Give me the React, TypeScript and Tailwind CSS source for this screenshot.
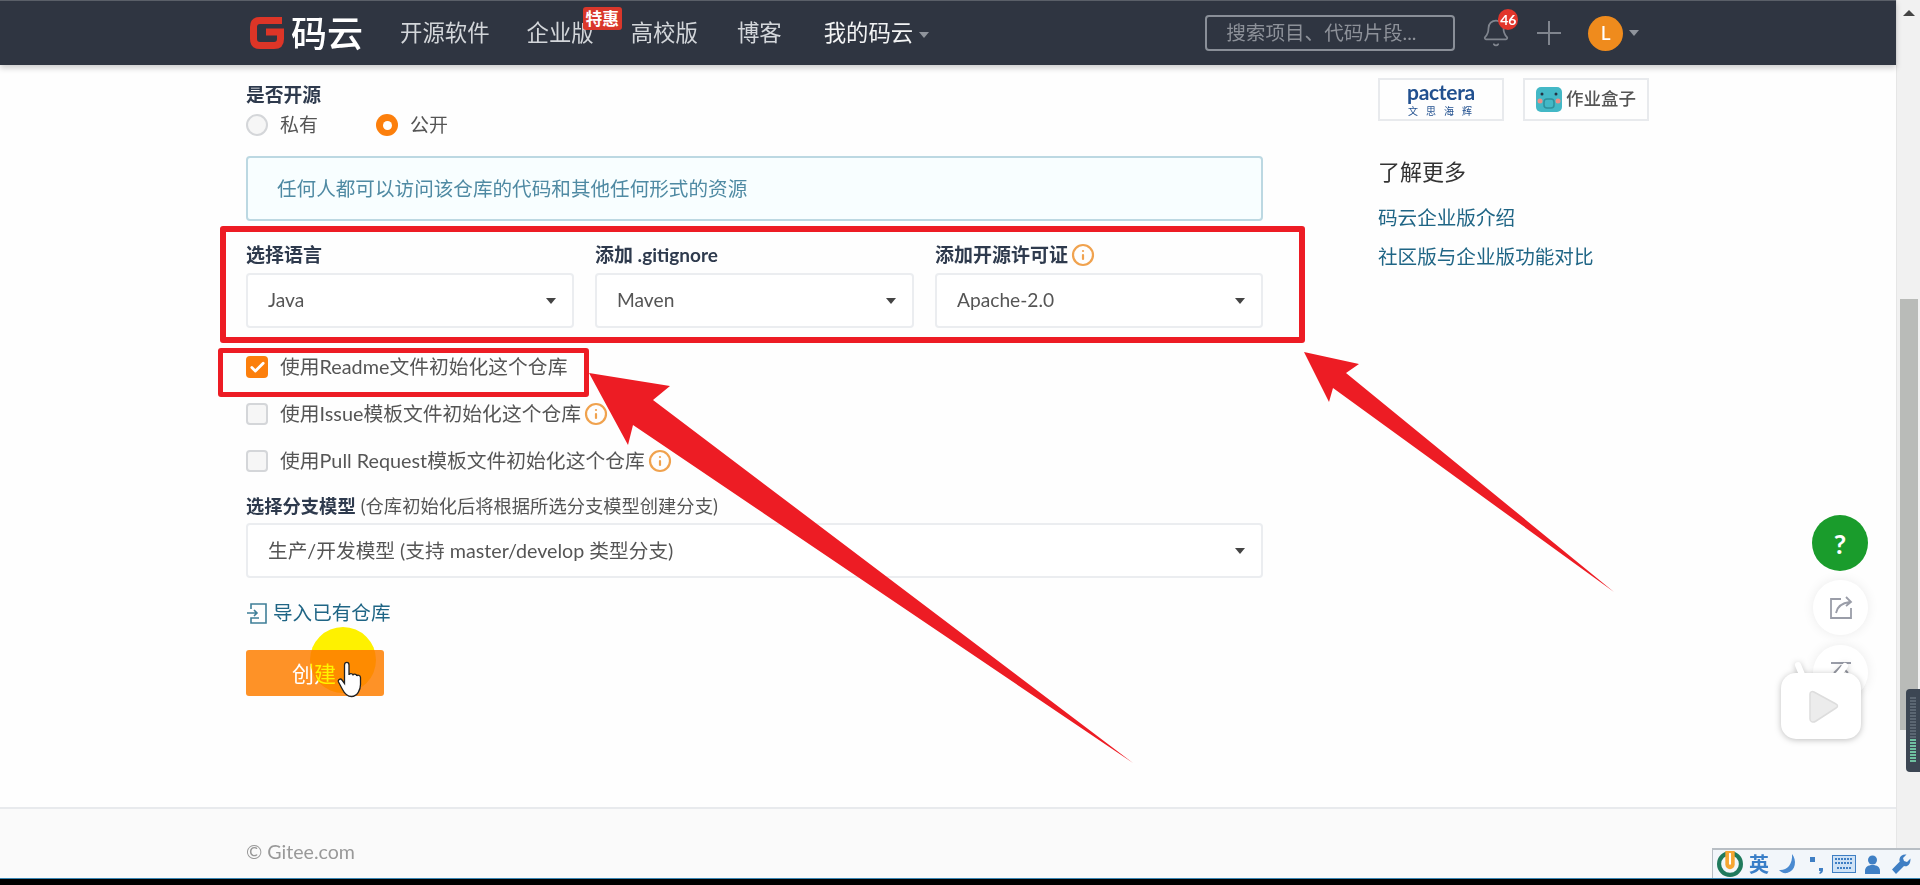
import { Bell, Check, Info } from "lucide-react";

const fontStack = "font-['Lato','Noto_Sans_CJK_SC',sans-serif]";

function Caret({ className }: { className: string }) {
  return <span className={`inline-block h-0 w-0 border-x-[5px] border-t-[6px] border-x-transparent ${className}`} />;
}

function NavLink({ label, className = "" }: { label: string; className?: string }) {
  return <a className={`text-[22.4px] leading-[32px] text-[#d3d6da] ${className}`}>{label}</a>;
}

function Select({ value, textSize = "text-[19.2px]" }: { value: string; textSize?: string }) {
  return (
    <div
      className={`flex h-[55px] items-center justify-between rounded-[4px] border-2 border-[#ebedf0] bg-white pl-[20px] pr-[16px] text-[#555] ${textSize}`}
    >
      <span>{value}</span>
      <Caret className="border-t-[#444]" />
    </div>
  );
}

function Field({ label, hint, value }: { label: string; hint?: boolean; value: string }) {
  return (
    <div className="flex flex-col gap-[4px]">
      <div className="flex h-[28px] items-center gap-[3px] text-[19px] font-bold text-[#2e3a4d]">
        <span>{label}</span>
        {hint ? <Info size={24} strokeWidth={2.2} className="text-[#f0a24e]" /> : null}
      </div>
      <Select value={value} />
    </div>
  );
}

function CheckRow({ label, checked = false, hint = false }: { label: string; checked?: boolean; hint?: boolean }) {
  return (
    <label className="flex h-[28px] items-center text-[19.8px] text-[#555]">
      {checked ? (
        <span className="flex h-[22px] w-[22px] items-center justify-center rounded-[4px] bg-[#fc7f0c]">
          <Check size={17} strokeWidth={4} className="text-white" />
        </span>
      ) : (
        <span className="h-[22px] w-[22px] rounded-[4px] border-2 border-[#d4d6d9] bg-[#f6f6f6]" />
      )}
      <span className="ml-[12px]">{label}</span>
      {hint ? <Info size={24} strokeWidth={2.2} className="ml-[3px] text-[#f0a24e]" /> : null}
    </label>
  );
}

function Annotations() {
  return (
    <>
      <div className="absolute left-[220px] top-[226px] h-[117px] w-[1085px] rounded-[3px] border-[6px] border-[#ed1c24]" />
      <div className="absolute left-[218px] top-[348px] h-[49px] w-[371px] rounded-[3px] border-[5px] border-[#ed1c24]" />
      <svg className="absolute left-0 top-0 h-[885px] w-[1920px]" viewBox="0 0 1920 885" fill="#ed1c24">
        <polygon points="589,373 670,386 653,400 1133,763 633,425 628,445" />
        <polygon points="1304,352 1359,364 1346,373 1614,592 1333,388 1329,402" />
      </svg>
      <div className="absolute left-[310px] top-[627px] h-[66px] w-[66px] rounded-full bg-[#fff200] mix-blend-multiply" />
      <svg className="absolute left-[337px] top-[661px]" width="26" height="37" viewBox="0 0 26 37">
        <path
          d="M7.500 4c0-3.500 4.500-3.500 4.500 0v10c.3-2 4-2 4 .5 0-2 3.800-2 3.800.6.500-1.500 3.700-1 3.700 1.400v7c0 5-3 12-9 12-5 0-7-3-9-7L1.500 21c-1-2.500 2-4 3.500-2l2.500 3.500z"
          fill="white"
          stroke="#222"
          strokeWidth="1.300"
        />
      </svg>
    </>
  );
}

function FloatingTools() {
  return (
    <>
      <div className="absolute left-[1812px] top-[515px] flex h-[56px] w-[56px] items-center justify-center rounded-full bg-[#1a9c2c] pt-[2px] text-[27px] font-bold text-white">
        ?
      </div>
      <div className="absolute left-[1813px] top-[580px] flex h-[55px] w-[55px] items-center justify-center rounded-full bg-white shadow-[0_0_12px_rgba(0,0,0,0.08)]">
        <svg width="24" height="23" viewBox="0 0 24 23" fill="none" stroke="#9a9da8" strokeWidth="1.8">
          <path d="M12 3H2v19h20V12" />
          <path d="M7 17c1-6 6-10 14-11M17 1l5 5-5 4" />
        </svg>
      </div>
      <div className="absolute left-[1813px] top-[645px] flex h-[55px] w-[55px] items-start justify-center rounded-full bg-white pt-[16px] shadow-[0_0_12px_rgba(0,0,0,0.08)]">
        <svg width="22" height="22" viewBox="0 0 22 22" fill="none" stroke="#9a9da8" strokeWidth="1.8">
          <path d="M1 2h20M11 22V5M4 12l7-7 7 7" />
        </svg>
      </div>
      <svg
        className="absolute left-[1779px] top-[658px] drop-shadow-[0_1px_3px_rgba(0,0,0,0.25)]"
        width="84"
        height="84"
        viewBox="0 0 84 84"
      >
        <path d="M24 19 19 7M58 19l8-11" stroke="white" strokeWidth="6" strokeLinecap="round" />
        <rect x="2" y="15" width="80" height="66" rx="15" fill="white" />
        <path
          d="M31 36c0-2 2-3 4-2l22 12c2 1 2 3 0 4L37 63c-3 2-6 1-6-2z"
          fill="#ececec"
          stroke="#dddddd"
          strokeWidth="1.5"
        />
      </svg>
      <div className="absolute left-[1906px] top-[689px] flex h-[83px] w-[14px] flex-col gap-[1px] rounded-l-[4px] bg-[#3c4653] px-[4px] py-[8px]">
        {Array.from({ length: 22 }).map((_, i) => (
          <span key={i} className={`h-[2px] w-full ${i > 13 ? "bg-[#6fc0a0]" : "bg-[#5b6672]"}`} />
        ))}
      </div>
    </>
  );
}

function ImeBar() {
  return (
    <div className="absolute left-[1712px] top-[848px] flex h-[30px] w-[208px] items-center border-l border-t-2 border-[#b8bec4] bg-[#f2f6fa] pl-[4px]">
      <svg width="26" height="26" viewBox="0 0 25 25">
        <circle cx="12.5" cy="12.5" r="10.5" fill="none" stroke="#1f7a5c" strokeWidth="4" />
        <path d="M8 0h9v13a4.5 4.5 0 0 1-9 0z" fill="#f6a632" />
        <path d="M11.5 2v11h2V2z" fill="white" />
      </svg>
      <span className="ml-[6px] text-[20px] font-bold leading-none text-[#3a7fc8]">英</span>
      <svg className="ml-[10px]" width="18" height="20" viewBox="0 0 18 20" fill="#4a8ad0">
        <path d="M13 0c5 6 4 17-5 19-3 .6-6-.5-8-3 7 1 14-5 13-16z" />
      </svg>
      <svg className="ml-[13px]" width="14" height="20" viewBox="0 0 14 20" fill="#3f7fc4">
        <rect x="0" y="3" width="5" height="5" />
        <path d="M9 14h4v2c0 2-1 3-3 4l-1-1c1-.6 1.500-1.200 1.500-2H9z" />
      </svg>
      <svg className="ml-[8px]" width="24" height="18" viewBox="0 0 24 18">
        <rect x="0.5" y="0.5" width="23" height="17" fill="#cfe2f5" stroke="#3f7fc4" />
        <path d="M3 4h18M3 8h18M5 13h14" stroke="#3f7fc4" strokeWidth="2" strokeDasharray="2 1" />
      </svg>
      <svg className="ml-[9px]" width="15" height="19" viewBox="0 0 15 19" fill="#3f7fc4">
        <circle cx="7.500" cy="5" r="4.500" />
        <path d="M0 19v-3c0-4 3-6 7.500-6s7.500 2 7.500 6v3z" />
      </svg>
      <svg className="ml-[12px]" width="19" height="20" viewBox="0 0 19 20" fill="#3f7fc4">
        <path d="M18.500 4.500 15 8l-3-1-1-3 3.500-3.500C11 0 8 1.500 7.500 5c-.2 1 0 2 .3 2.500L0 15.500 4 20l8-8c3 1 6.500-.5 6.500-7.500z" />
      </svg>
    </div>
  );
}

export default function App() {
  return (
    <div className={`relative flex h-[885px] w-[1920px] flex-col overflow-hidden bg-white ${fontStack}`}>
      <div className="flex min-h-0 flex-1">
        <div className="flex min-w-0 flex-1 flex-col">
          <header className="z-10 flex h-[65px] shrink-0 items-center border-t border-[#5a5f68] bg-[#2f3541] pl-[249px] shadow-[0_3px_6px_rgba(0,0,0,0.2)]">
            <svg width="36" height="34" viewBox="0 0 36 34" fill="none">
              <path d="M33 4.500H11Q4.500 4.500 4.500 11V23Q4.500 29.500 11 29.500H25Q31.500 29.500 31.500 23V16H17" stroke="#dd3527" strokeWidth="7" />
            </svg>
            <span className="ml-[6px] w-[72px] text-[36px] font-medium leading-none text-white">码云</span>
            <NavLink label="开源软件" className="ml-[37px]" />
            <div className="relative ml-[37px]">
              <NavLink label="企业版" />
              <span className="absolute left-[56px] top-[-10px] whitespace-nowrap rounded-[3px] bg-[#d9372b] px-[3px] text-[16.800px] font-bold leading-[23px] text-white">
                特惠
              </span>
            </div>
            <NavLink label="高校版" className="ml-[37px]" />
            <NavLink label="博客" className="ml-[39px]" />
            <NavLink label="我的码云" className="ml-[42px] text-[#f2f3f4]" />
            <Caret className="ml-[6px] mt-[4px] border-t-[#8f949c]" />
            <div className="ml-[276px] flex h-[36px] w-[250px] items-center rounded-[4px] border-2 border-[#8a8f98] pl-[19px] text-[19.600px] text-[#8d9199]">
              搜索项目、代码片段...
            </div>
            <div className="relative ml-[26px] h-[30px] w-[26px]">
              <Bell size={30} strokeWidth={1.4} className="text-[#80858e]" />
              <span className="absolute left-[17px] top-[-9px] flex h-[21px] w-[20px] items-center justify-center rounded-full bg-[#e2362c] text-[14px] font-bold text-white">
                46
              </span>
            </div>
            <svg className="ml-[30px]" width="24" height="24" viewBox="0 0 24 24" stroke="#80858e" strokeWidth="2">
              <path d="M12 0v24M0 12h24" />
            </svg>
            <span className="ml-[27px] flex h-[35px] w-[35px] items-center justify-center rounded-full bg-[#ef8b1d] text-[19px] font-medium text-white">
              L
            </span>
            <Caret className="ml-[6px] border-t-[#8f949c]" />
          </header>

          <main className="flex min-h-0 flex-1 bg-[#fefefe] pl-[246px]">
            <form className="flex w-[1017px] flex-col">
              <div className="mt-[16px] h-[28px] text-[18.800px] font-bold leading-[28px] text-[#2e3a4d]">是否开源</div>
              <div className="mt-[2px] flex h-[28px] items-center text-[19px] text-[#555]">
                <span className="h-[22px] w-[22px] rounded-full border-2 border-[#d4d6d9] bg-[#f6f6f6]" />
                <span className="ml-[12px]">私有</span>
                <span className="ml-[58px] flex h-[22px] w-[22px] items-center justify-center rounded-full bg-[#fc7f0c]">
                  <span className="h-[9px] w-[9px] rounded-full bg-white" />
                </span>
                <span className="ml-[12px]">公开</span>
              </div>
              <div className="mt-[17px] flex h-[65px] items-center rounded-[4px] border-2 border-[#bcd8e2] bg-[#f8feff] pl-[29px] text-[19.600px] text-[#4f8aa3]">
                任何人都可以访问该仓库的代码和其他任何形式的资源
              </div>
              <div className="mt-[20px] grid grid-cols-[328px_319px_328px] gap-x-[21px]">
                <Field label="选择语言" value="Java" />
                <Field label="添加 .gitignore" value="Maven" />
                <Field label="添加开源许可证" hint value="Apache-2.0" />
              </div>
              <div className="mt-[25px] flex flex-col gap-[19px]">
                <CheckRow checked label="使用Readme文件初始化这个仓库" />
                <CheckRow hint label="使用Issue模板文件初始化这个仓库" />
                <CheckRow hint label="使用Pull Request模板文件初始化这个仓库" />
              </div>
              <div className="mt-[18px] flex h-[28px] items-center text-[18.300px] text-[#555]">
                <span className="font-bold text-[#2e3a4d]">选择分支模型</span>
                <span className="ml-[5px]">(仓库初始化后将根据所选分支模型创建分支)</span>
              </div>
              <div className="mt-[2px]">
                <Select value="生产/开发模型 (支持 master/develop 类型分支)" textSize="text-[19.7px]" />
              </div>
              <a className="mt-[21px] flex h-[28px] items-center gap-[6px] text-[19.600px] text-[#1f6585]">
                <svg width="21" height="21" viewBox="0 0 21 21" fill="none" stroke="#3f7f98" strokeWidth="1.600">
                  <path d="M5 6V1h15v19H5v-5h8M1 10h10M8 7l3 3-3 3" />
                </svg>
                导入已有仓库
              </a>
              <button
                type="button"
                className="mt-[23px] h-[46px] w-[138px] rounded-[3px] bg-[#fe9227] pr-[2px] text-[22px] text-white"
              >
                创建
              </button>
            </form>

            <aside className="ml-[115px] flex flex-col pt-[13px]">
              <div className="flex gap-[19px]">
                <div className="flex h-[43px] w-[126px] flex-col items-center justify-center border-2 border-[#e8eaed]">
                  <span className="text-[21px] font-bold leading-[20px] tracking-[-0.3px] text-[#21508f]">pactera</span>
                  <span className="mt-[3px] pl-[6px] text-[10px] leading-[12px] tracking-[8px] text-[#21508f]">文思海辉</span>
                </div>
                <div className="flex h-[43px] w-[126px] items-center justify-center gap-[4px] border-2 border-[#e8eaed]">
                  <svg width="26" height="25" viewBox="0 0 26 25">
                    <rect width="26" height="25" rx="5" fill="#43b8c6" />
                    <circle cx="6" cy="7" r="1.500" fill="#234" />
                    <circle cx="20" cy="7" r="1.500" fill="#234" />
                    <circle cx="4" cy="14" r="2.500" fill="#ee8e86" />
                    <circle cx="22" cy="14" r="2.500" fill="#ee8e86" />
                    <rect x="8" y="12" width="10" height="9" rx="3" fill="none" stroke="#2d8f9c" strokeWidth="1.500" />
                  </svg>
                  <span className="text-[17.500px] font-medium text-[#555]">作业盒子</span>
                </div>
              </div>
              <div className="mt-[36px] h-[30px] text-[22px] leading-[30px] text-[#333]">了解更多</div>
              <a className="mt-[17px] h-[28px] text-[19.600px] leading-[28px] text-[#1f6585]">码云企业版介绍</a>
              <a className="mt-[11px] h-[28px] text-[19.600px] leading-[28px] text-[#1f6585]">社区版与企业版功能对比</a>
            </aside>
          </main>

          <footer className="flex h-[71px] shrink-0 items-start border-t-2 border-[#e8eaed] bg-[#fafafa] pl-[246px] pt-[29px] text-[19.600px] leading-[28px] text-[#999]">
            © Gitee.com
          </footer>
        </div>

        <div className="flex w-[24px] shrink-0 flex-col items-center border-l border-[#e6e6e6] bg-[#f1f1f1]">
          <span className="mt-[10px] h-0 w-0 border-x-[6px] border-b-[6px] border-x-transparent border-b-[#444]" />
          <div className="mt-[283px] h-[431px] w-[18px] bg-[#b9bbb8]" />
        </div>
      </div>

      <div className="h-[7px] shrink-0 border-t border-[#3a87b5] bg-black" />

      <Annotations />
      <FloatingTools />
      <ImeBar />
    </div>
  );
}
